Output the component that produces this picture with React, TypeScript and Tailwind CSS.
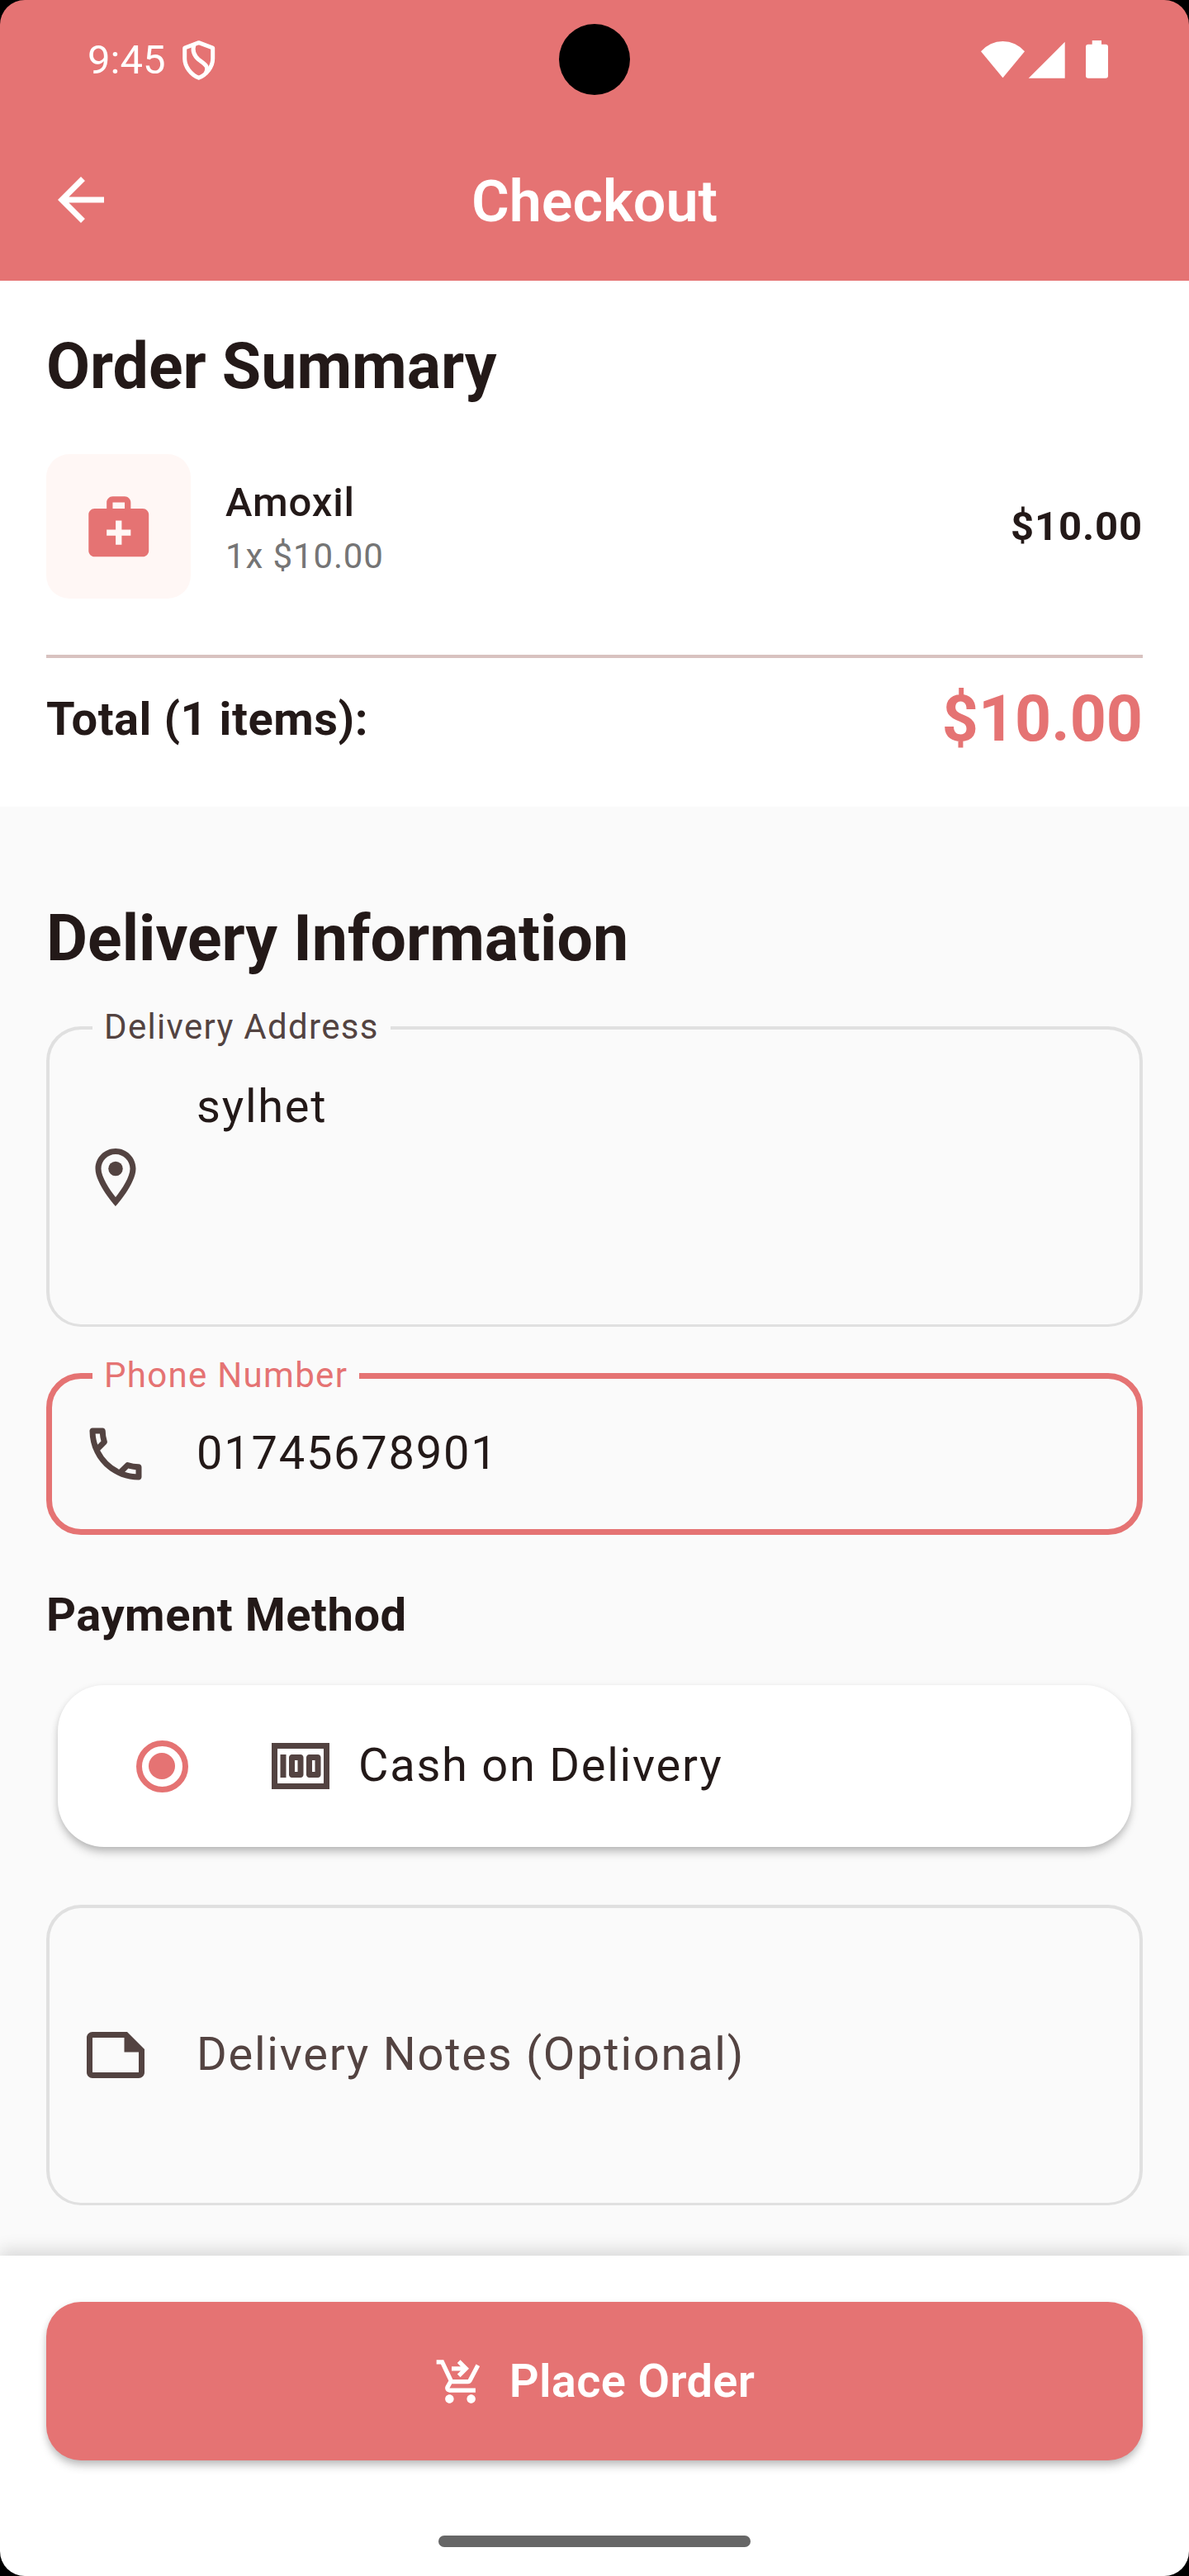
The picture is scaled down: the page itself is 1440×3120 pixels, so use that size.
import type { ReactNode } from "react";
import {
  MdArrowBack,
  MdMedicalServices,
  MdMoney,
  MdOutlineLocationOn,
  MdOutlinePhone,
  MdShoppingCartCheckout,
} from "react-icons/md";

function StatusBar() {
  return (
    <div className="relative flex h-[144px] items-center justify-between pl-[106px] pr-[98px] text-white">
      <div className="flex items-center">
        <span className="w-[115px] pt-[1px] text-[49px] leading-[58px]">9:45</span>
        <svg className="h-[50px] w-[40px]" viewBox="0 0 40 50" fill="none" stroke="white" strokeWidth="5" strokeLinejoin="round">
          <path d="M19.700 4.700 36.700 11V24C36.700 34 29 43.500 19.700 47.300C10.400 43.500 2.700 34 2.700 24V11Z" />
          <path d="M14 7C12 13 12.500 19 19.700 25.300C26 30 33 33 28 42" />
        </svg>
      </div>
      <div className="absolute left-[677px] top-[29px] size-[86px] rounded-full bg-black" />
      <svg className="h-[48px] w-[155px]" viewBox="0 0 155 48" fill="white">
        <path d="M1 14.300A34.700 34.700 0 0 1 54 14.300L27.500 46.300Z" />
        <path d="M58.700 46.700 102.700 2.700V46.700Z" />
        <path d="M135.700 1h11.300v4.700h5a3 3 0 0 1 3 3v35a3 3 0 0 1-3 3h-21a3 3 0 0 1-3-3v-35a3 3 0 0 1 3-3h4.700Z" />
      </svg>
    </div>
  );
}

function Header() {
  return (
    <header className="h-[340px] bg-[#e57373]">
      <StatusBar />
      <div className="grid h-[196px] grid-cols-[84px_1fr_84px] items-center px-[56px] text-white">
        <MdArrowBack className="size-[84px]" />
        <h1 className="pt-[3px] text-center text-[70px] font-semibold leading-[98px]">Checkout</h1>
      </div>
    </header>
  );
}

function OrderSummary() {
  return (
    <section className="h-[637px] bg-white px-[56px] pt-[55px]">
      <h2 className="text-[77px] font-bold leading-[98px]">Order Summary</h2>
      <div className="mt-[57px] flex h-[175px] items-center">
        <div className="flex size-[175px] items-center justify-center rounded-[28px] bg-[#fff7f5] text-[#e57373]">
          <MdMedicalServices className="size-[87.500px]" />
        </div>
        <div className="ml-[42px] flex-1">
          <p className="text-[49px] font-medium leading-[70px] tracking-[0.875px]">Amoxil</p>
          <p className="mt-[2px] text-[42px] leading-[56px] tracking-[0.875px] text-[#757575]">1x $10.00</p>
        </div>
        <p className="pt-[1px] text-[49px] font-bold leading-[70px] tracking-[0.875px]">$10.00</p>
      </div>
      <div className="mt-[68px] h-[4px] bg-[#d8c2c0]" />
      <div className="mt-[25px] flex h-[98px] items-center justify-between">
        <p className="text-[56px] font-bold leading-[84px] tracking-[0.525px]">Total (1 items):</p>
        <p className="text-[77px] font-bold leading-[98px] text-[#e57373]">$10.00</p>
      </div>
    </section>
  );
}

function FieldLabel({ className, children }: { className: string; children: ReactNode }) {
  return (
    <span className={`absolute whitespace-nowrap bg-[#fafafa] px-[14px] text-[42px] leading-[56px] tracking-[1.3125px] ${className}`}>
      {children}
    </span>
  );
}

function PaymentOption() {
  return (
    <div className="mx-[14px] mt-[43px] flex h-[196px] items-center rounded-[56px] bg-white pl-[94.500px] shadow-[0_8px_12px_-2px_rgba(0,0,0,0.22),0_2px_8px_rgba(0,0,0,0.10)]">
      <span className="flex size-[63px] items-center justify-center rounded-full border-[7px] border-[#e57373]">
        <span className="size-[32px] rounded-full bg-[#e57373]" />
      </span>
      <MdMoney className="ml-[94.500px] size-[84px] text-[#534341]" />
      <span className="mb-[3px] ml-[28px] text-[56px] leading-[84px] tracking-[1.75px]">Cash on Delivery</span>
    </div>
  );
}

function DeliveryForm() {
  return (
    <section className="h-[1755px] bg-[#fafafa] px-[56px] pt-[111px]">
      <h2 className="text-[77px] font-bold leading-[98px]">Delivery Information</h2>

      <div className="relative mt-[57px] flex h-[364px] items-center rounded-[42px] border-4 border-b-3 border-[#e0e0e0] pl-[38px]">
        <FieldLabel className="-top-[31px] left-[52px] text-[#534341]">Delivery Address</FieldLabel>
        <MdOutlineLocationOn className="size-[84px]" color="#534341" />
        <p className="mb-[171px] ml-[56px] text-[56px] leading-[84px] tracking-[1.75px]">sylhet</p>
      </div>

      <div className="relative mt-[56px] flex h-[196px] items-center rounded-[42px] border-[7px] border-[#e57373] pl-[35px]">
        <FieldLabel className="-top-[32px] left-[49px] text-[#e57373]">Phone Number</FieldLabel>
        <MdOutlinePhone className="size-[84px]" color="#534341" />
        <p className="mb-[2px] ml-[56px] text-[56px] leading-[84px] tracking-[1.75px]">01745678901</p>
      </div>

      <h3 className="mt-[55px] text-[56px] font-bold leading-[84px] tracking-[0.525px]">Payment Method</h3>

      <PaymentOption />

      <div className="mt-[70px] flex h-[364px] items-center rounded-[42px] border-4 border-b-3 border-[#e0e0e0] pl-[38px] text-[#534341]">
        <svg className="mb-[1px] size-[84px]" viewBox="0 0 24 24" fill="currentColor">
          <path d="M16 4H4c-1.100 0-2 .9-2 2v12.010c0 1.100.9 1.990 2 1.990h16c1.100 0 2-.9 2-2v-8l-6-6ZM4 18.010V6h11v5h5v7.010H4Z" />
        </svg>
        <p className="mb-[4px] ml-[56px] text-[56px] leading-[84px] tracking-[1.75px]">Delivery Notes (Optional)</p>
      </div>
    </section>
  );
}

function BottomBar() {
  return (
    <footer className="relative flex h-[388px] flex-col items-center bg-white px-[56px] pt-[56px] shadow-[0_-8px_18px_rgba(0,0,0,0.125)]">
      <button className="flex h-[192px] w-full items-center justify-center rounded-[42px] bg-[#e57373] text-white shadow-[0_8px_12px_-2px_rgba(0,0,0,0.22),0_2px_8px_rgba(0,0,0,0.10)]">
        <MdShoppingCartCheckout className="size-[63px]" />
        <span className="ml-[28px] text-[56px] font-semibold leading-[84px] tracking-[0.35px]">Place Order</span>
      </button>
      <div className="mt-[91px] h-[14px] w-[378px] rounded-full bg-[#666666]" />
    </footer>
  );
}

export default function App() {
  return (
    <div className="h-[3120px] w-[1440px] bg-black font-['Roboto',sans-serif]">
      <div className="h-full overflow-hidden rounded-[30px] text-[#231918]">
        <Header />
        <OrderSummary />
        <DeliveryForm />
        <BottomBar />
      </div>
    </div>
  );
}
